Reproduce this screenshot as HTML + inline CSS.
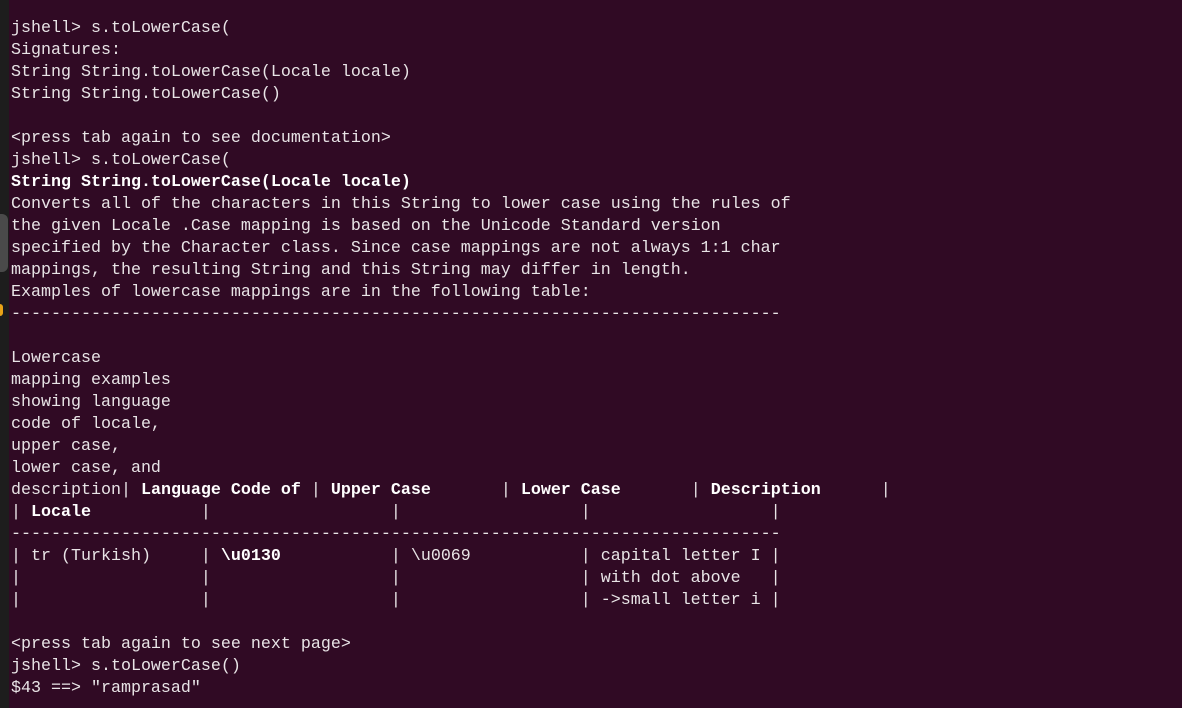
<!DOCTYPE html>
<html><head><meta charset="utf-8"><style>
html,body{margin:0;padding:0;width:1182px;height:708px;overflow:hidden;background:#300a24;}
.strip{position:absolute;left:0;top:0;width:9px;height:708px;background:#1d1d1d;}
.knob{position:absolute;left:0;top:214px;width:8px;height:58px;background:#4a4a4a;border-radius:0 6px 6px 0;}
.dot{position:absolute;left:0;top:304px;width:3px;height:12px;background:#e8a317;border-radius:0 3px 3px 0;}
pre{position:absolute;left:11px;top:18px;margin:0;font-family:"Liberation Mono",monospace;font-size:16.67px;line-height:22px;color:#e8e4e6;white-space:pre;}
b{font-weight:bold;color:#fff;}
</style></head><body>
<div class="strip"></div><div class="knob"></div><div class="dot"></div>
<pre>jshell&gt; s.toLowerCase(
Signatures:
String String.toLowerCase(Locale locale)
String String.toLowerCase()

&lt;press tab again to see documentation&gt;
jshell&gt; s.toLowerCase(
<b>String String.toLowerCase(Locale locale)</b>
Converts all of the characters in this String to lower case using the rules of
the given Locale .Case mapping is based on the Unicode Standard version
specified by the Character class. Since case mappings are not always 1:1 char
mappings, the resulting String and this String may differ in length.
Examples of lowercase mappings are in the following table:
-----------------------------------------------------------------------------

Lowercase
mapping examples
showing language
code of locale,
upper case,
lower case, and
description| <b>Language Code of</b> | <b>Upper Case</b>       | <b>Lower Case</b>       | <b>Description</b>      |
| <b>Locale</b>           |                  |                  |                  |
-----------------------------------------------------------------------------
| tr (Turkish)     | <b>\u0130</b>           | \u0069           | capital letter I |
|                  |                  |                  | with dot above   |
|                  |                  |                  | -&gt;small letter i |

&lt;press tab again to see next page&gt;
jshell&gt; s.toLowerCase()
$43 ==&gt; "ramprasad"</pre>
</body></html>
